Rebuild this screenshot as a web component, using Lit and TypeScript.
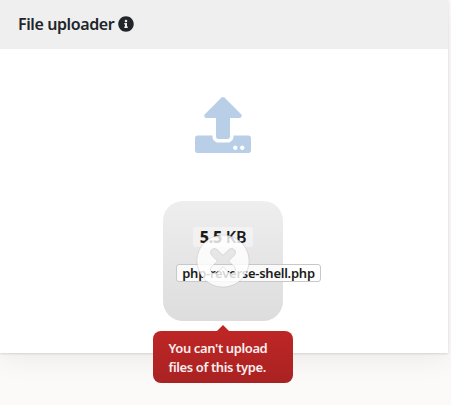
import { LitElement, html, css } from "lit";
import { customElement } from "lit/decorators.js";

@customElement("file-preview")
class FilePreview extends LitElement {
  static styles = css`
    :host { display: block; position: relative; width: 120px; height: 120px; }
    .tile { height: 120px; border-radius: 20px; background: linear-gradient(to bottom, #eee, #ddd); }
    .details { position: absolute; inset: 0; color: #1b1b1b; font-weight: 600; white-space: nowrap; }
    .size { position: absolute; top: 26px; left: 30px; width: 60px; height: 20px; border-radius: 3px;
      background: rgba(255,255,255,.4); text-align: center; font-size: 16px; line-height: 20px; letter-spacing: -.3px; }
    .size b { font-weight: 800; }
    .name { position: absolute; top: 63px; left: 13px; width: 145px; height: 18px; box-sizing: border-box;
      border: 1px solid #c8c8c8; border-radius: 3px; background: rgba(255,255,255,.8);
      text-align: center; font-size: 13px; line-height: 17px; letter-spacing: -.25px; }
    .mark { position: absolute; left: 33px; top: 33px; width: 54px; height: 54px; }
    .error { position: absolute; top: 130px; left: -10px; width: 140px; height: 52px; box-sizing: border-box;
      padding: 8px 15.5px; border-radius: 8px; background: linear-gradient(to bottom, #be2626, #a92222);
      color: #fbeeee; font-size: 13px; line-height: 19px; font-weight: 600; letter-spacing: -.38px; white-space: nowrap; }
    .error::after { content: ""; position: absolute; top: -6px; left: 64px; border: 6px solid transparent;
      border-top: 0; border-bottom-color: #be2626; }
  `;
  render() {
    return html`
      <div class="tile"></div>
      <div class="details">
        <div class="size"><b>5.5</b> KB</div>
        <div class="name">php-reverse-shell.php</div>
      </div>
      <svg class="mark" viewBox="0 0 54 54">
        <path transform="translate(0 -2)" fill="#fff" fill-opacity=".8165" fill-rule="evenodd" stroke="#747474" stroke-opacity=".198"
          d="M32.6568542,29 L38.3106978,23.3461564 C39.8771021,21.7797521 39.8758057,19.2483887 38.3137085,17.6862915 C36.7547899,16.1273729 34.2176035,16.1255422 32.6538436,17.6893022 L27,23.3431458 L21.3461564,17.6893022 C19.7823965,16.1255422 17.2452101,16.1273729 15.6862915,17.6862915 C14.1241943,19.2483887 14.1228979,21.7797521 15.6893022,23.3461564 L21.3431458,29 L15.6893022,34.6538436 C14.1228979,36.2202479 14.1241943,38.7516113 15.6862915,40.3137085 C17.2452101,41.8726271 19.7823965,41.8744578 21.3461564,40.3106978 L27,34.6568542 L32.6538436,40.3106978 C34.2176035,41.8744578 36.7547899,41.8726271 38.3137085,40.3137085 C39.8758057,38.7516113 39.8771021,36.2202479 38.3106978,34.6538436 L32.6568542,29 Z M27,55 C41.3594035,55 53,43.3594035 53,29 C53,14.6405965 41.3594035,3 27,3 C12.6405965,3 1,14.6405965 1,29 C1,43.3594035 12.6405965,55 27,55 Z"/>
      </svg>
      <div class="error">You can't upload<br>files of this type.</div>
    `;
  }
}

@customElement("app-root")
class AppRoot extends LitElement {
  static styles = css`
    :host { display: block; height: 405px; overflow: hidden; background: #fbfaf8;
      font-family: "Noto Sans", sans-serif; }
    .card { width: 448px; height: 353px; background: #fff;
      box-shadow: 0 8px 24px rgba(0,0,0,.06), 0 1px 2px rgba(0,0,0,.12); }
    .header { display: flex; align-items: center; gap: 4px; height: 49px; box-sizing: border-box;
      padding: 0 0 1px 18px; background: #efefef; color: #212529; }
    h1 { margin: 0; font-size: 16px; line-height: 24px; font-weight: 600; letter-spacing: -.4px; }
    .info { width: 16px; height: 16px; fill: #212529; }
    .body { display: flex; flex-direction: column; align-items: center; width: 446px; padding-top: 48px; }
    .upload { width: 56px; height: 56px; fill: #b9cfe7; margin-bottom: 48px; }
  `;
  render() {
    return html`
      <section class="card">
        <header class="header">
          <h1>File uploader</h1>
          <svg class="info" viewBox="0 0 512 512"><path d="M256 8C119.043 8 8 119.083 8 256c0 136.997 111.043 248 248 248s248-111.003 248-248C504 119.083 392.957 8 256 8zm0 110c23.196 0 42 18.804 42 42s-18.804 42-42 42-42-18.804-42-42 18.804-42 42-42zm56 254c0 6.627-5.373 12-12 12h-88c-6.627 0-12-5.373-12-12v-24c0-6.627 5.373-12 12-12h12v-64h-12c-6.627 0-12-5.373-12-12v-24c0-6.627 5.373-12 12-12h64c6.627 0 12 5.373 12 12v100h12c6.627 0 12 5.373 12 12v24z"/></svg>
        </header>
        <div class="body">
          <svg class="upload" viewBox="0 0 512 512"><path d="M296 384h-80c-13.3 0-24-10.7-24-24V192h-87.7c-17.8 0-26.7-21.5-14.1-34.1L242.3 5.7c7.5-7.5 19.8-7.5 27.3 0l152.2 152.2c12.6 12.6 3.7 34.1-14.1 34.1H320v168c0 13.3-10.7 24-24 24zm216-8v112c0 13.3-10.7 24-24 24H24c-13.3 0-24-10.7-24-24V376c0-13.3 10.7-24 24-24h136v8c0 30.9 25.1 56 56 56h80c30.9 0 56-25.1 56-56v-8h136c13.3 0 24 10.7 24 24zm-124 88c0-11-9-20-20-20s-20 9-20 20 9 20 20 20 20-9 20-20zm64 0c0-11-9-20-20-20s-20 9-20 20 9 20 20 20 20-9 20-20z"/></svg>
          <file-preview></file-preview>
        </div>
      </section>
    `;
  }
}
